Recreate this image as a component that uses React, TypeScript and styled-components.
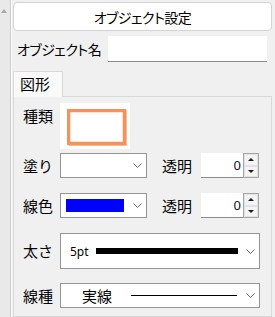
import React from 'react';
import styled, { createGlobalStyle } from 'styled-components';

const GlobalStyle = createGlobalStyle`
  html, body {
    margin: 0;
    padding: 0;
    background: #f0f0f0;
  }
  body {
    font-family: "Noto Sans CJK JP", "Noto Sans", sans-serif;
    font-size: 15px;
    color: #000;
  }
`;

const Screen = styled.div`
  display: flex;
  height: 317px;
  overflow: hidden;
`;

const ScrollTrack = styled.div`
  width: 11px;
  flex: none;
  box-sizing: border-box;
  background: #e9e9e9;
  border-right: 1px solid #cdcdcd;
  padding: 9px 0 0 1px;
`;

const ArrowUp = styled.div`
  width: 0;
  height: 0;
  border-left: 3px solid transparent;
  border-right: 3px solid transparent;
  border-bottom: 4px solid #a8a8a8;
`;

const Main = styled.div`
  flex: 1;
  display: flex;
  flex-direction: column;
  border-left: 1px solid #fafafa;
  padding: 2px 3px 0 1px;
  min-width: 0;
`;

const TitleButton = styled.div`
  height: 29px;
  box-sizing: border-box;
  border: 1px solid #d3d3d3;
  border-radius: 4px;
  background: #fff;
  display: flex;
  align-items: center;
  justify-content: center;
  font-size: 14px;
  font-feature-settings: "palt";
  letter-spacing: -0.5px;
  white-space: nowrap;
  line-height: 1;
`;

const NameRow = styled.div`
  margin-top: 5px;
  height: 26px;
  display: flex;
  align-items: center;
`;

const NameLabel = styled.span`
  width: 95px;
  flex: none;
  padding-left: 4px;
  box-sizing: border-box;
  font-size: 14px;
  font-feature-settings: "palt";
  letter-spacing: -0.5px;
  white-space: nowrap;
`;

const TextBox = styled.div`
  width: 159px;
  height: 26px;
  box-sizing: border-box;
  background: #fff;
  border-bottom: 1px solid #8a8a8a;
`;

const TabStrip = styled.div`
  margin-top: 9px;
  display: flex;
`;

const Tab = styled.div`
  position: relative;
  z-index: 1;
  width: 50px;
  height: 26px;
  box-sizing: border-box;
  border: 1px solid #d9d9d9;
  border-bottom: none;
  background: #f9f9f9;
  padding: 2px 0 0 6px;
  line-height: 20px;
`;

const Panel = styled.div`
  flex: 1;
  margin-top: -1px;
  border: 1px solid #d9d9d9;
  background: #f0f0f0;
  padding: 6px 0 0 9px;
  display: flex;
  flex-direction: column;
`;

const Row = styled.div<{ $gap: number; $top?: boolean }>`
  display: flex;
  align-items: ${p => (p.$top ? 'flex-start' : 'center')};
  margin-top: ${p => p.$gap}px;
`;

const Label = styled.span<{ $pad?: number }>`
  width: 37px;
  flex: none;
  padding-top: ${p => p.$pad ?? 0}px;
  line-height: 20px;
`;

const SideLabel = styled.span`
  width: 39px;
  margin-left: 15px;
  line-height: 20px;
`;

const Preview = styled.div`
  width: 70px;
  height: 46px;
  background: #fff;
  padding: 6px 0 0 7px;
  box-sizing: border-box;
`;

const OrangeRect = styled.div`
  width: 59px;
  height: 36px;
  box-sizing: border-box;
  border: 3px solid #f3925a;
  box-shadow: 0 0 1px 0.5px #f8bb96, inset 0 0 1px 0.5px #f8c9ac;
`;

const Select = styled.div<{ $width: number; $height: number }>`
  width: ${p => p.$width}px;
  height: ${p => p.$height}px;
  box-sizing: border-box;
  border: 1px solid #959595;
  background: #fff;
  display: flex;
  align-items: center;
  padding: 0 4px 0 5px;
`;

const SelectBody = styled.div`
  flex: 1;
  display: flex;
  align-items: center;
  min-width: 0;
`;

const Swatch = styled.div`
  width: 58px;
  height: 13px;
  background: #0000ff;
`;

const Points = styled.span`
  font-family: "Noto Sans", sans-serif;
  font-size: 12px;
  padding-left: 4px;
`;

const StrokeSample = styled.div<{ $width: number; $thick: number; $gap: number }>`
  width: ${p => p.$width}px;
  height: ${p => p.$thick}px;
  background: #000;
  margin-left: ${p => p.$gap}px;
`;

const DashName = styled.span`
  padding-left: 16px;
  line-height: 20px;
`;

const Spinner = styled.div`
  display: flex;
  height: 25px;
`;

const SpinInput = styled.div`
  width: 42px;
  height: 25px;
  box-sizing: border-box;
  background: #fff;
  border-bottom: 1px solid #8a8a8a;
  display: flex;
  align-items: center;
  justify-content: flex-end;
  padding-right: 2px;
  font-family: "Noto Sans", sans-serif;
  font-size: 13px;
  color: #101030;
`;

const SpinButtons = styled.div`
  width: 16px;
  height: 25px;
  box-sizing: border-box;
  border: 1px solid #a6a6a6;
  background: #f4f4f4;
  display: flex;
  flex-direction: column;
`;

const SpinButton = styled.div<{ $down?: boolean }>`
  flex: 1;
  border: 1px solid #e2e2e2;
  display: flex;
  align-items: center;
  justify-content: center;

  &::after {
    content: '';
    width: 0;
    height: 0;
    border-left: 3px solid transparent;
    border-right: 3px solid transparent;
    ${p =>
      p.$down
        ? 'border-top: 3px solid #1a1a1a;'
        : 'border-bottom: 3px solid #1a1a1a;'}
  }
`;

function Chevron() {
  return (
    <svg width="9" height="5" viewBox="0 0 9 5">
      <polyline points="0.5,0.5 4.5,4.5 8.5,0.5" fill="none" stroke="#6b6b6b" strokeWidth="1" />
    </svg>
  );
}

function NumberSpin({ value }: { value: number }) {
  return (
    <Spinner>
      <SpinInput>{value}</SpinInput>
      <SpinButtons>
        <SpinButton />
        <SpinButton $down />
      </SpinButtons>
    </Spinner>
  );
}

export default function App() {
  return (
    <>
      <GlobalStyle />
      <Screen>
        <ScrollTrack>
          <ArrowUp />
        </ScrollTrack>
        <Main>
          <TitleButton>オブジェクト設定</TitleButton>
          <NameRow>
            <NameLabel>オブジェクト名</NameLabel>
            <TextBox />
          </NameRow>
          <TabStrip>
            <Tab>図形</Tab>
          </TabStrip>
          <Panel>
            <Row $gap={0} $top>
              <Label $pad={3}>種類</Label>
              <Preview>
                <OrangeRect />
              </Preview>
            </Row>
            <Row $gap={4}>
              <Label>塗り</Label>
              <Select $width={87} $height={25}>
                <SelectBody />
                <Chevron />
              </Select>
              <SideLabel>透明</SideLabel>
              <NumberSpin value={0} />
            </Row>
            <Row $gap={15}>
              <Label>線色</Label>
              <Select $width={87} $height={25}>
                <SelectBody>
                  <Swatch />
                </SelectBody>
                <Chevron />
              </Select>
              <SideLabel>透明</SideLabel>
              <NumberSpin value={0} />
            </Row>
            <Row $gap={15}>
              <Label>太さ</Label>
              <Select $width={200} $height={36}>
                <SelectBody>
                  <Points>5pt</Points>
                  <StrokeSample $width={142} $thick={6} $gap={7} />
                </SelectBody>
                <Chevron />
              </Select>
            </Row>
            <Row $gap={14}>
              <Label>線種</Label>
              <Select $width={200} $height={25}>
                <SelectBody>
                  <DashName>実線</DashName>
                  <StrokeSample $width={106} $thick={1} $gap={19} />
                </SelectBody>
                <Chevron />
              </Select>
            </Row>
          </Panel>
        </Main>
      </Screen>
    </>
  );
}
